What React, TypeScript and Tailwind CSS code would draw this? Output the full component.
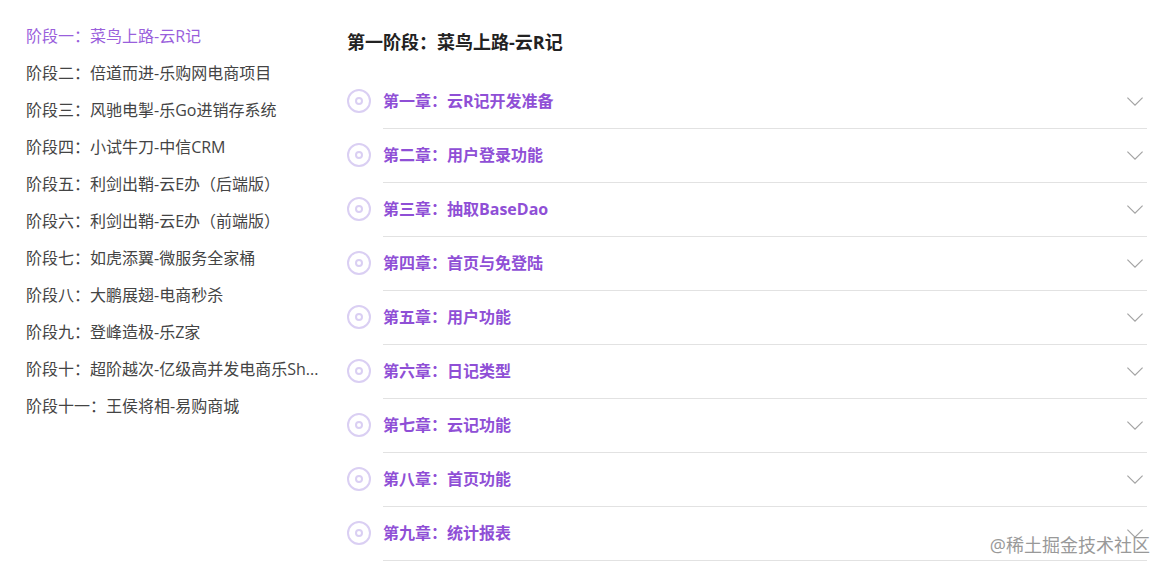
import React from 'react';
import { useState } from 'react';
import clsx from 'clsx';

const stages = [
    '阶段一：菜鸟上路-云R记',
    '阶段二：倍道而进-乐购网电商项目',
    '阶段三：风驰电掣-乐Go进销存系统',
    '阶段四：小试牛刀-中信CRM',
    '阶段五：利剑出鞘-云E办（后端版）',
    '阶段六：利剑出鞘-云E办（前端版）',
    '阶段七：如虎添翼-微服务全家桶',
    '阶段八：大鹏展翅-电商秒杀',
    '阶段九：登峰造极-乐Z家',
    '阶段十：超阶越次-亿级高并发电商乐Sh...',
    '阶段十一：王侯将相-易购商城',
];

const chapters = [
    '第一章：云R记开发准备',
    '第二章：用户登录功能',
    '第三章：抽取BaseDao',
    '第四章：首页与免登陆',
    '第五章：用户功能',
    '第六章：日记类型',
    '第七章：云记功能',
    '第八章：首页功能',
    '第九章：统计报表',
];

function DiscIcon() {
    return (
        <svg className="h-6 w-6 shrink-0" viewBox="0 0 24 24" fill="none" stroke="#dacff3" strokeWidth="2" aria-hidden="true">
            <circle cx="12" cy="12" r="11" />
            <circle cx="12" cy="12" r="3" />
        </svg>
    );
}

function ArrowIcon() {
    return (
        <svg className="mr-1 h-4 w-4 shrink-0" viewBox="0 0 16 16" fill="none" stroke="#a3a3a3" strokeWidth="1.2" aria-hidden="true">
            <path d="M0.4 4.6L8 12.2L15.6 4.6" />
        </svg>
    );
}

export default function App() {
    const [activeStage, setActiveStage] = useState(0);

    return (
        <div className="relative flex gap-6 bg-white pt-[18px] pr-[21px] pl-[26px] font-['Open_Sans','Noto_Sans_CJK_SC',sans-serif]">
            {/* Stage list */}
            <nav className="w-[297px] shrink-0">
                <ul>
                    {stages.map((stage, index) => (
                        <li key={stage}>
                            <a
                                href="#"
                                onClick={(e) => {
                                    e.preventDefault();
                                    setActiveStage(index);
                                }}
                                className={clsx(
                                    'block truncate text-base leading-[37px] hover:text-[#8f4fd6]',
                                    index === activeStage ? 'text-[#9a5fdc]' : 'text-[#444444]'
                                )}
                            >
                                {stage}
                            </a>
                        </li>
                    ))}
                </ul>
            </nav>

            {/* Chapters of the stage */}
            <main className="min-w-0 flex-1">
                <h1 className="mb-3.5 pt-1.5 text-lg leading-[37px] font-bold text-[#222222]">第一阶段：菜鸟上路-云R记</h1>
                <ul>
                    {chapters.map((chapter) => (
                        <li key={chapter} className="flex gap-3">
                            <div className="flex items-center pb-0.5">
                                <DiscIcon />
                            </div>
                            <button
                                type="button"
                                className="flex h-[54px] flex-1 cursor-pointer items-center justify-between border-b border-[#e2e2e2] pb-0.5 text-left text-base font-bold text-[#8f4fd6]"
                            >
                                {chapter}
                                <ArrowIcon />
                            </button>
                        </li>
                    ))}
                </ul>
            </main>

            <p className="absolute right-[18px] bottom-0 text-lg leading-8 text-[#999999]">@稀土掘金技术社区</p>
        </div>
    );
}
